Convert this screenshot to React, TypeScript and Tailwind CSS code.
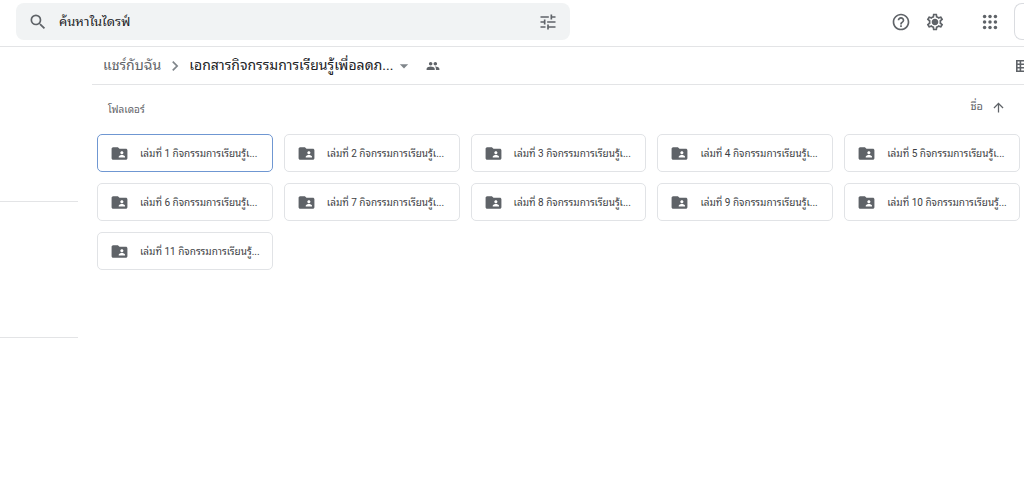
import React from "react";
import {
  MdArrowDropDown,
  MdArrowUpward,
  MdChevronRight,
  MdFolderShared,
  MdHelpOutline,
  MdOutlineSettings,
  MdPeople,
  MdSearch,
  MdTune,
} from "react-icons/md";

const folders: string[] = [
  "เล่มที่ 1 กิจกรรมการเรียนรู้เ...",
  "เล่มที่ 2 กิจกรรมการเรียนรู้เ...",
  "เล่มที่ 3 กิจกรรมการเรียนรู้เ...",
  "เล่มที่ 4 กิจกรรมการเรียนรู้เ...",
  "เล่มที่ 5 กิจกรรมการเรียนรู้เ...",
  "เล่มที่ 6 กิจกรรมการเรียนรู้เ...",
  "เล่มที่ 7 กิจกรรมการเรียนรู้เ...",
  "เล่มที่ 8 กิจกรรมการเรียนรู้เ...",
  "เล่มที่ 9 กิจกรรมการเรียนรู้เ...",
  "เล่มที่ 10 กิจกรรมการเรียนรู้...",
  "เล่มที่ 11 กิจกรรมการเรียนรู้...",
];

function AppsIcon() {
  return (
    <svg viewBox="0 0 24 24" className="size-5" fill="currentColor" aria-hidden="true">
      {[5.5, 12, 18.5].map((y) =>
        [5.5, 12, 18.5].map((x) => <circle key={`${x}-${y}`} cx={x} cy={y} r="2.1" />)
      )}
    </svg>
  );
}

function SettingsIcon() {
  return (
    <span className="grid place-items-center">
      <MdOutlineSettings className="col-start-1 row-start-1 size-5" />
      <svg viewBox="0 0 20 20" className="col-start-1 row-start-1 size-5" fill="currentColor" aria-hidden="true">
        <circle cx="10" cy="10" r="2.6" />
      </svg>
    </span>
  );
}

function ListViewIcon() {
  return (
    <svg viewBox="0 0 16 12" className="h-3 w-4" fill="none" stroke="currentColor" strokeWidth="1.6" aria-hidden="true">
      <path d="M.8.8h14.4v10.4H.8zM.8 4.2h14.4M.8 7.8h14.4M4.4.8v10.4" />
    </svg>
  );
}

function Header() {
  return (
    <header className="flex h-[47px] items-start justify-between border-b border-[#e3e4e6] pt-[3px] pl-4">
      <form role="search" className="flex h-[37px] w-[554px] items-center rounded-lg bg-[#f1f3f4] px-3">
        <button type="button" aria-label="ค้นหา" className="shrink-0">
          <MdSearch className="size-5" />
        </button>
        <input
          type="text"
          aria-label="ค้นหาในไดรฟ์"
          placeholder="ค้นหาในไดรฟ์"
          className="h-full min-w-0 flex-1 bg-transparent px-[11px] text-[13px] text-[#202124] outline-none placeholder:text-[#202124] placeholder:opacity-100"
        />
        <button type="button" aria-label="ตัวเลือกการค้นหา" className="shrink-0">
          <MdTune className="size-5" />
        </button>
      </form>
      <div className="flex h-[37px] items-center">
        <button type="button" aria-label="ช่วยเหลือ" className="mr-[14px]">
          <MdHelpOutline className="size-5" />
        </button>
        <button type="button" aria-label="การตั้งค่า" className="mr-[35px]">
          <SettingsIcon />
        </button>
        <button type="button" aria-label="แอป" className="mr-[14px]">
          <AppsIcon />
        </button>
        <button type="button" aria-label="บัญชี" className="h-full w-[10px] rounded-l-lg border border-r-0 border-[#dadce0]" />
      </div>
    </header>
  );
}

function Breadcrumbs() {
  return (
    <div className="flex h-[38px] items-center justify-between overflow-hidden border-b border-[#e3e4e6] pl-[11px]">
      <nav className="flex items-center text-[14px] whitespace-nowrap">
        <a href="#shared">แชร์กับฉัน</a>
        <MdChevronRight className="mx-1 size-5 text-[#80868b]" />
        <button type="button" className="flex items-center text-[#202124]">
          เอกสารกิจกรรมการเรียนรู้เพื่อลดภ...
          <MdArrowDropDown className="ml-px size-5 text-[#80868b]" />
        </button>
        <button type="button" aria-label="แชร์" className="ml-3">
          <MdPeople className="size-[14px]" />
        </button>
      </nav>
      <button type="button" aria-label="มุมมองรายการ" className="w-2 shrink-0 overflow-hidden">
        <ListViewIcon />
      </button>
    </div>
  );
}

function FolderCard({ name, selected }: { name: string; selected: boolean }) {
  return (
    <button
      type="button"
      className={`flex h-[38px] min-w-0 items-center overflow-hidden rounded-[5px] border bg-white pl-3 text-left text-[10px] whitespace-nowrap text-[#3c4043] ${
        selected ? "border-[#6f97d2]" : "border-[#e1e3e6]"
      }`}
    >
      <MdFolderShared className="mr-[11px] size-[19px] shrink-0 text-[#5f6368]" />
      <span>{name}</span>
    </button>
  );
}

export default function App() {
  return (
    <div className="min-h-screen overflow-hidden bg-white font-['Roboto','Noto_Sans_Thai_Looped','Loma','Waree','Garuda','Noto_Serif_Thai','Noto_Sans',sans-serif] text-[#5f6368]">
      <Header />
      <div className="flex">
        <aside className="w-[78px] shrink-0 pt-[154px]">
          <hr className="border-[#e3e4e6]" />
          <hr className="mt-[135px] border-[#e3e4e6]" />
        </aside>
        <main className="ml-[14px] min-w-0 flex-1">
          <Breadcrumbs />
          <div className="flex h-[49px] items-center justify-between pr-[18px] pl-4">
            <h2 className="text-[10px]">โฟลเดอร์</h2>
            <button type="button" className="flex items-center gap-2 pb-1 text-[11px]">
              ชื่อ
              <MdArrowUpward className="size-[15px]" />
            </button>
          </div>
          <div className="grid grid-cols-5 gap-[11px] pr-1 pl-[5px]">
            {folders.map((name, i) => (
              <FolderCard key={name} name={name} selected={i === 0} />
            ))}
          </div>
        </main>
      </div>
    </div>
  );
}
